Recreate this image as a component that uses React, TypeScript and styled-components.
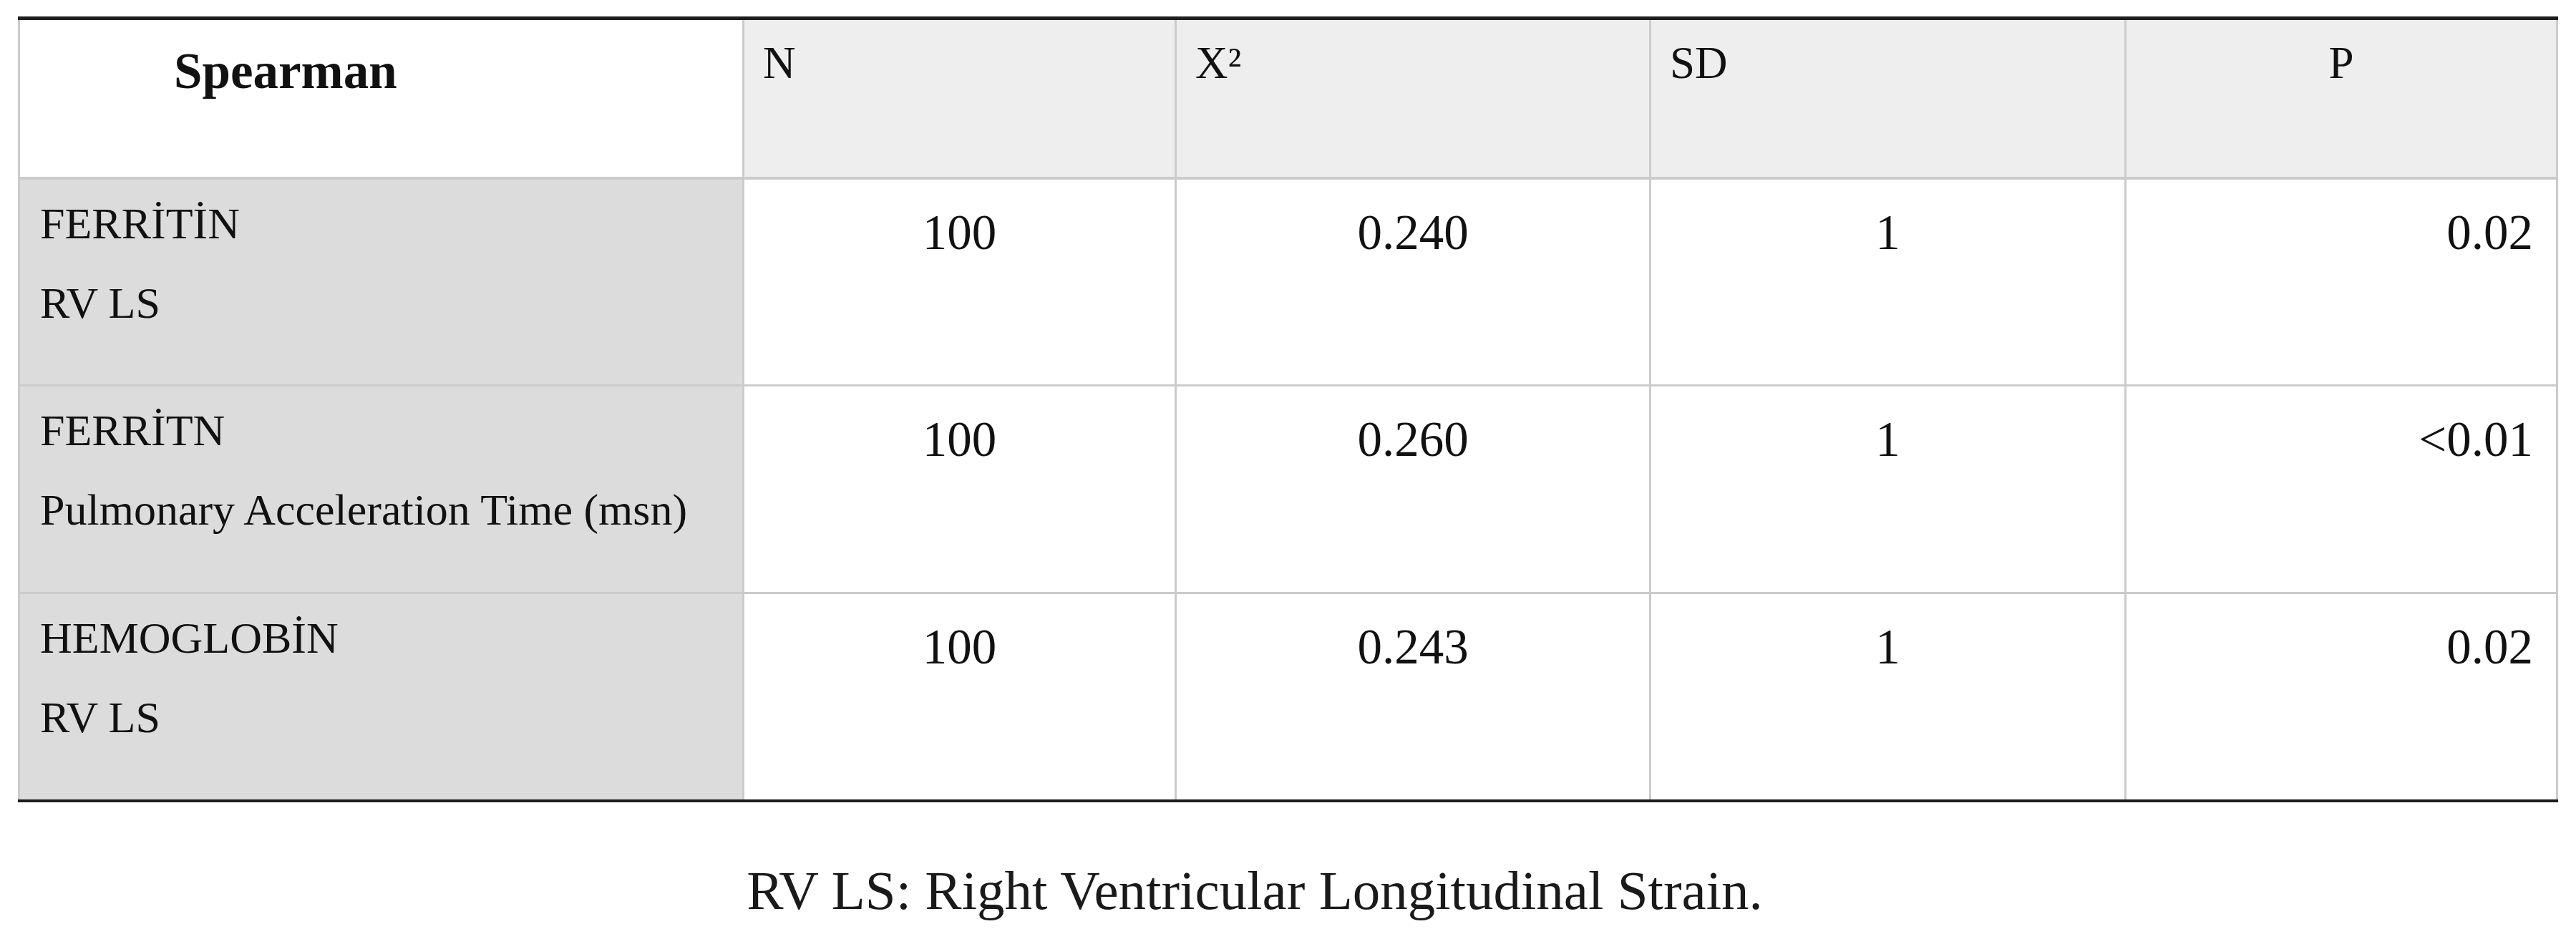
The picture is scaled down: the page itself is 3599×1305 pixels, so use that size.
import React from "react"
import styled, { createGlobalStyle } from "styled-components"

const GlobalStyle = createGlobalStyle`
  html, body {
    margin: 0;
    padding: 0;
    background: #ffffff;
  }
  body {
    font-family: "Liberation Serif", "Times New Roman", serif;
    color: #111111;
  }
`

const Page = styled.main`
  display: flex;
  flex-direction: column;
  padding: 23px 0 0 25px;
  width: 3546px;
`

const Table = styled.table`
  border-collapse: collapse;
  table-layout: fixed;
  width: 3546px;
  border-top: 5px solid #1d1d1d;
  border-bottom: 4px solid #1d1d1d;
`

const HeadRow = styled.tr`
  height: 223px;
`

const BodyRow = styled.tr`
  height: 290px;
`

const HeadCell = styled.th<{ $center?: boolean }>`
  background: #eeeeee;
  border: 3px solid #cbcbcb;
  border-bottom-width: 4px;
  vertical-align: top;
  text-align: ${(p) => (p.$center ? "center" : "left")};
  padding: 24px 26px 0;
  font-size: 63px;
  font-weight: 400;
`

const CornerCell = styled.th`
  background: #ffffff;
  border: 3px solid #cbcbcb;
  border-bottom-width: 4px;
  vertical-align: top;
  text-align: left;
  padding: 31px 0 0 215px;
  font-size: 71px;
  font-weight: 700;
`

const LabelCell = styled.td`
  background: #dcdcdc;
  border: 3px solid #cbcbcb;
  vertical-align: top;
  padding: 6px 0 0 28px;
  font-size: 62px;
  line-height: 111px;
`

const Line = styled.div`
  white-space: nowrap;
`

const ValueCell = styled.td<{ $align: "center" | "right" }>`
  background: #ffffff;
  border: 3px solid #cbcbcb;
  vertical-align: top;
  text-align: ${(p) => p.$align};
  padding: 35px 32px 0;
  font-size: 69px;
`

const Caption = styled.p`
  margin: 79px 0 0;
  padding-right: 90px;
  text-align: center;
  font-size: 77px;
  color: #1a1a1a;
`

type Row = {
  label: string[]
  n: string
  x2: string
  sd: string
  p: string
}

const rows: Row[] = [
  { label: ["FERRİTİN", "RV LS"], n: "100", x2: "0.240", sd: "1", p: "0.02" },
  {
    label: ["FERRİTN", "Pulmonary Acceleration Time (msn)"],
    n: "100",
    x2: "0.260",
    sd: "1",
    p: "<0.01"
  },
  { label: ["HEMOGLOBİN", "RV LS"], n: "100", x2: "0.243", sd: "1", p: "0.02" }
]

function App() {
  return (
    <Page>
      <GlobalStyle />
      <Table>
        <colgroup>
          <col style={{ width: 1012 }} />
          <col style={{ width: 604 }} />
          <col style={{ width: 663 }} />
          <col style={{ width: 664 }} />
          <col style={{ width: 603 }} />
        </colgroup>
        <thead>
          <HeadRow>
            <CornerCell>Spearman</CornerCell>
            <HeadCell>N</HeadCell>
            <HeadCell>X²</HeadCell>
            <HeadCell>SD</HeadCell>
            <HeadCell $center>P</HeadCell>
          </HeadRow>
        </thead>
        <tbody>
          {rows.map((r) => (
            <BodyRow key={r.label.join("-")}>
              <LabelCell>
                {r.label.map((l) => (
                  <Line key={l}>{l}</Line>
                ))}
              </LabelCell>
              <ValueCell $align="center">{r.n}</ValueCell>
              <ValueCell $align="center">{r.x2}</ValueCell>
              <ValueCell $align="center">{r.sd}</ValueCell>
              <ValueCell $align="right">{r.p}</ValueCell>
            </BodyRow>
          ))}
        </tbody>
      </Table>
      <Caption>RV LS: Right Ventricular Longitudinal Strain.</Caption>
    </Page>
  )
}

export default App
